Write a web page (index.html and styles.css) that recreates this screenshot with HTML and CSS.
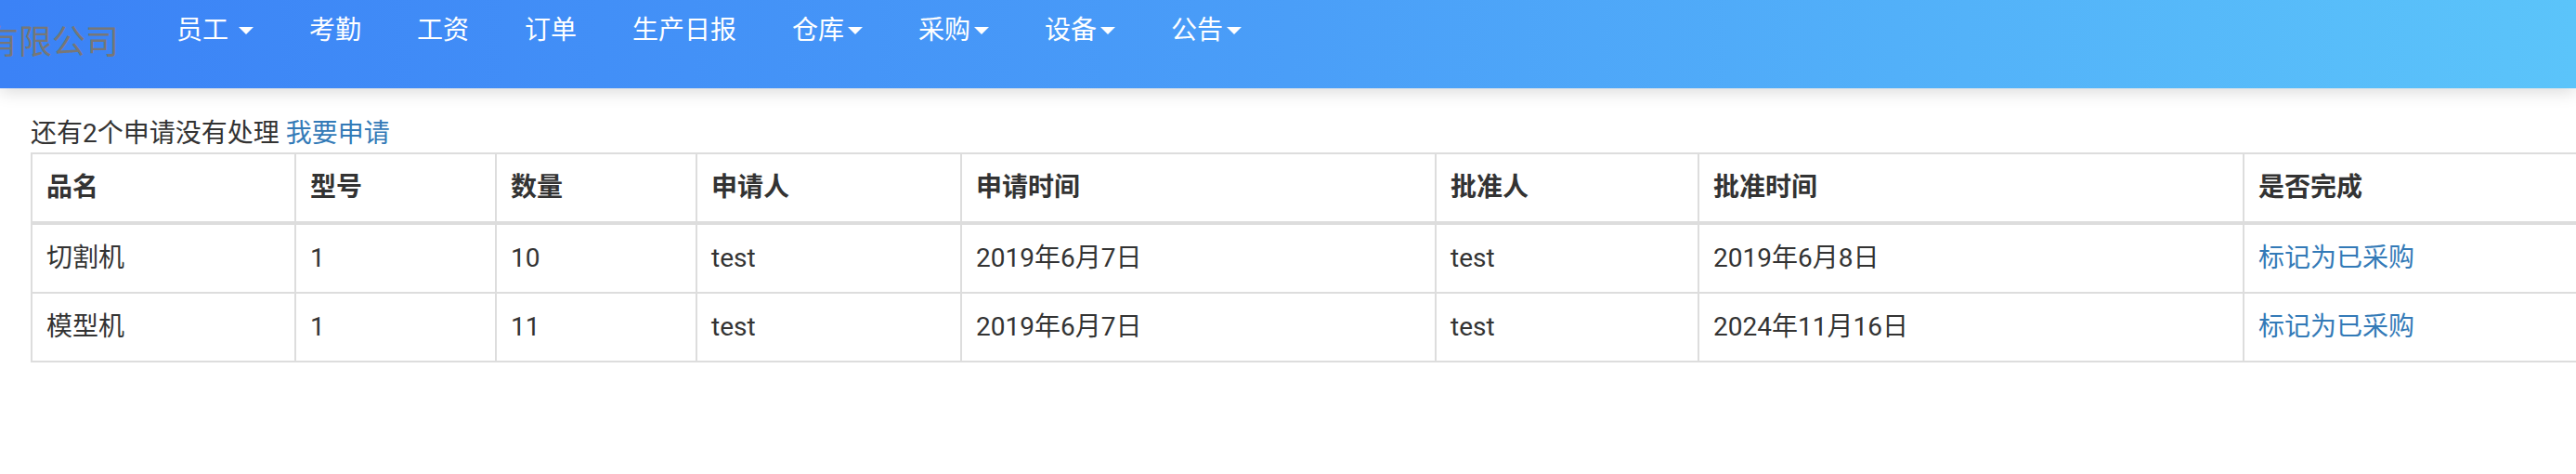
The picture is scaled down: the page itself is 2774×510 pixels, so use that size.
FILE: index.html
```html
<!DOCTYPE html>
<html lang="zh-CN">
<head>
<meta charset="utf-8">
<title>采购申请</title>
<link rel="stylesheet" href="styles.css">
</head>
<body>
<header class="navbar">
  <a class="brand" href="#">某某有限公司</a>
  <nav class="nav">
    <a class="nav-link" href="#">员工 <span class="caret"></span></a>
    <a class="nav-link" href="#">考勤</a>
    <a class="nav-link" href="#">工资</a>
    <a class="nav-link" href="#">订单</a>
    <a class="nav-link" href="#">生产日报</a>
    <a class="nav-link" href="#">仓库<span class="caret"></span></a>
    <a class="nav-link" href="#">采购<span class="caret"></span></a>
    <a class="nav-link" href="#">设备<span class="caret"></span></a>
    <a class="nav-link" href="#">公告<span class="caret"></span></a>
  </nav>
</header>
<main class="content">
  <p class="notice">还有2个申请没有处理 <a class="link" href="#">我要申请</a></p>
  <table class="table">
    <thead>
      <tr>
        <th class="c1">品名</th>
        <th class="c2">型号</th>
        <th class="c3">数量</th>
        <th class="c4">申请人</th>
        <th class="c5">申请时间</th>
        <th class="c6">批准人</th>
        <th class="c7">批准时间</th>
        <th class="c8">是否完成</th>
      </tr>
    </thead>
    <tbody>
      <tr>
        <td>切割机</td>
        <td>1</td>
        <td>10</td>
        <td>test</td>
        <td>2019年6月7日</td>
        <td>test</td>
        <td>2019年6月8日</td>
        <td><a class="link" href="#">标记为已采购</a></td>
      </tr>
      <tr>
        <td>模型机</td>
        <td>1</td>
        <td>11</td>
        <td>test</td>
        <td>2019年6月7日</td>
        <td>test</td>
        <td>2024年11月16日</td>
        <td><a class="link" href="#">标记为已采购</a></td>
      </tr>
    </tbody>
  </table>
</main>
</body>
</html>
```
FILE: styles.css
```css
* { box-sizing: border-box; }
html, body {
  margin: 0;
  padding: 0;
  background: #fff;
  overflow: hidden;
}
body {
  font-family: Roboto, "Noto Sans CJK SC", sans-serif;
  font-size: 28px;
  line-height: 40px;
  color: #333;
  width: 2774px;
  height: 510px;
}
a { text-decoration: none; }

.navbar {
  height: 95px;
  display: flex;
  align-items: flex-start;
  background: linear-gradient(to right, #3b82f6 0%, #4a9ef8 50%, #5bc4fa 100%);
  box-shadow: 0 3px 18px rgba(0, 0, 0, 0.16);
  position: relative;
  z-index: 1;
}
.brand {
  margin-left: -88px;
  padding: 26px 32px 0 0;
  font-size: 36px;
  line-height: 40px;
  color: #777;
  white-space: nowrap;
}
.nav {
  display: flex;
}
.nav-link {
  display: flex;
  align-items: center;
  padding: 13px 30px 0;
  line-height: 40px;
  color: #fff;
  white-space: pre;
}
.caret {
  display: inline-block;
  width: 0;
  height: 0;
  margin-left: 4px;
  border-top: 8px solid #fff;
  border-left: 8px solid transparent;
  border-right: 8px solid transparent;
}

.content {
  padding: 0 0 0 33px;
  overflow: hidden;
}
.notice {
  margin: 29px 0 0;
  line-height: 40px;
  white-space: nowrap;
}
.link { color: #337ab7; }

.table {
  border-collapse: collapse;
  table-layout: fixed;
  width: 2800px;
  margin-top: 0;
}
.table th, .table td {
  border: 2px solid #ddd;
  padding: 16px 15px;
  text-align: left;
  vertical-align: top;
  line-height: 40px;
  white-space: nowrap;
}
.table th {
  font-weight: bold;
  border-bottom-width: 4px;
}
.c1 { width: 284px; }
.c2 { width: 216px; }
.c3 { width: 216px; }
.c4 { width: 285px; }
.c5 { width: 511px; }
.c6 { width: 283px; }
.c7 { width: 587px; }
.c8 { width: 418px; }
```
